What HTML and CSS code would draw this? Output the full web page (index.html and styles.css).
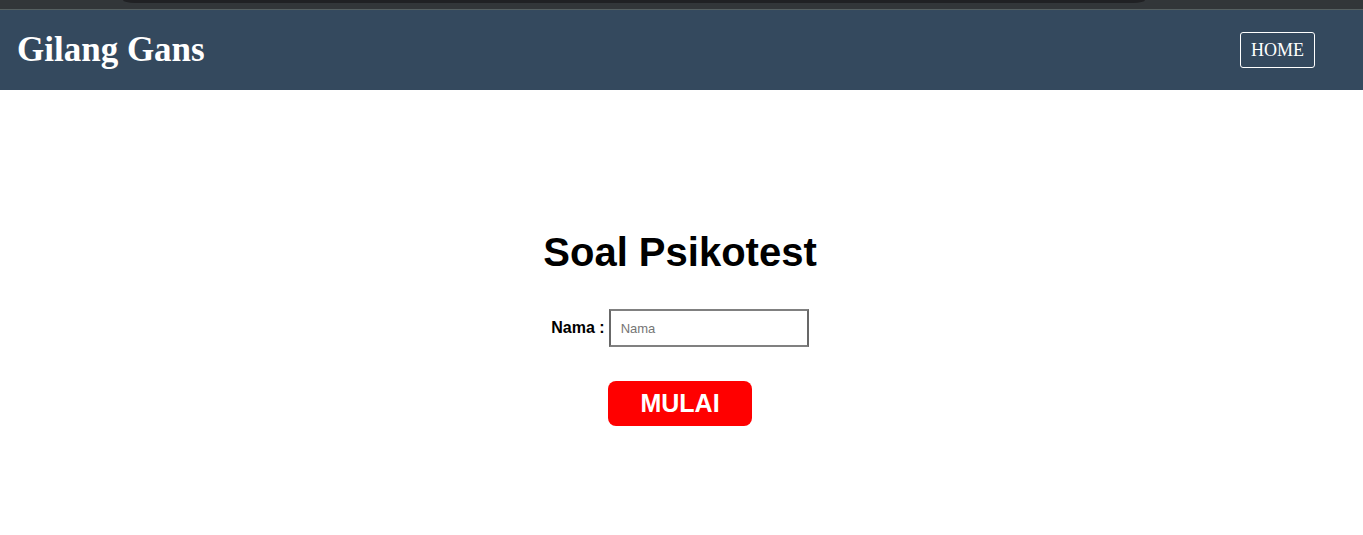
FILE: index.html
```html
<!DOCTYPE html>
<html lang="id">
<head>
  <meta charset="utf-8">
  <title>Soal Psikotest</title>
  <link rel="stylesheet" href="styles.css">
</head>
<body>
  <div class="toolbar"><div class="address-bar"></div></div>
  <header class="navbar">
    <h1 class="brand">Gilang Gans</h1>
    <nav><a class="nav-link" href="#">HOME</a></nav>
  </header>
  <main class="content">
    <form class="start-form">
      <h2 class="title">Soal Psikotest</h2>
      <div class="field">
        <label class="label" for="nama">Nama :</label>
        <input class="input" id="nama" type="text" placeholder="Nama">
      </div>
      <button class="submit" type="button">MULAI</button>
    </form>
  </main>
</body>
</html>
```

FILE: styles.css
```css
* {
  box-sizing: border-box;
}

body {
  margin: 0;
  min-height: 100vh;
  display: flex;
  flex-direction: column;
  background: #fff;
  font-family: "Liberation Sans", Arial, sans-serif;
}

.toolbar {
  height: 10px;
  padding: 0 16% 0 9%;
  background: #323639;
  border-bottom: 1px solid #566061;
}

.address-bar {
  height: 3px;
  background: #202124;
  border-radius: 0 0 12px 12px / 0 0 3px 3px;
}

.navbar {
  height: 80px;
  padding: 0 48px 0 17px;
  display: flex;
  align-items: center;
  justify-content: space-between;
  background: #34495e;
  color: #fff;
  font-family: "Liberation Serif", "Times New Roman", serif;
}

.brand {
  margin: 0;
  font-size: 35px;
  line-height: 40px;
}

.nav-link {
  display: block;
  padding: 7px 10px;
  border: 1px solid #fff;
  border-radius: 3px;
  color: #fff;
  font-size: 18px;
  line-height: 20px;
  text-decoration: none;
}

.content {
  flex: 1;
  display: flex;
  align-items: center;
  justify-content: center;
  padding: 30px 3px 0 0;
}

.start-form {
  display: flex;
  flex-direction: column;
  align-items: center;
}

.title {
  margin: 0 0 34px;
  font-size: 40px;
  line-height: 46px;
}

.field {
  display: flex;
  align-items: center;
  gap: 4px;
  margin-bottom: 34px;
}

.label {
  font-size: 16px;
  font-weight: bold;
  line-height: 18px;
}

.input {
  width: 200px;
  height: 38px;
  padding: 0 10px;
  border: 2px solid;
  border-color: #808080 #686868;
  background: #fff;
  font-family: inherit;
  font-size: 13px;
}

.input::placeholder {
  color: #757575;
}

.submit {
  padding: 8px 32px;
  border: 0;
  border-radius: 8px;
  background: #f00;
  color: #fff;
  font-family: inherit;
  font-size: 25px;
  font-weight: bold;
  line-height: 29px;
}
```
